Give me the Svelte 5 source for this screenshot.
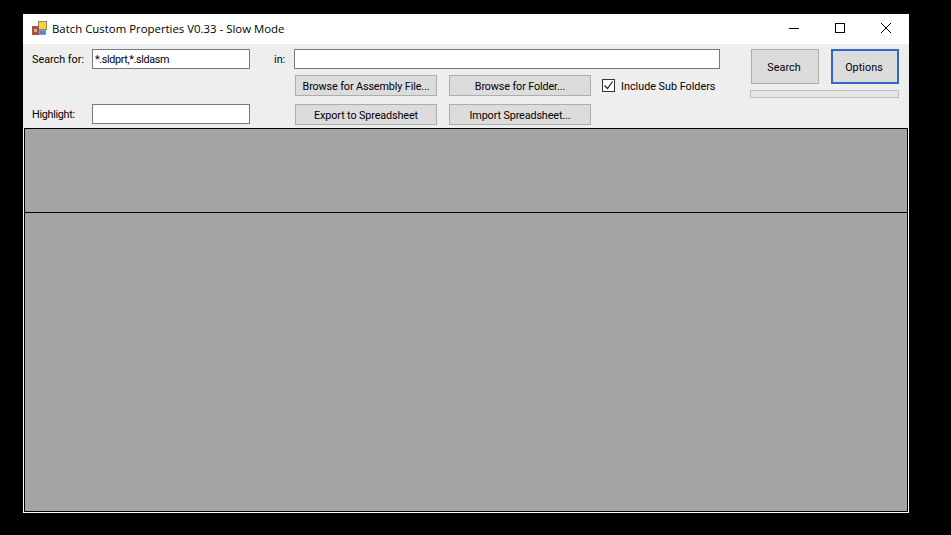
<script>
  let searchFor = '*.sldprt,*.sldasm';
</script>

<div class="window">
  <div class="titlebar">
    <svg class="app-icon" width="16" height="16" viewBox="0 0 16 16">
      <rect x="6.5" y="0.5" width="8" height="8" fill="#f7cf45" stroke="#9c8a4a" />
      <rect x="0.5" y="5.5" width="6" height="8" fill="#d93f2a" stroke="#8a5a50" />
      <rect x="2" y="8" width="3" height="3" fill="#f0a090" />
      <rect x="7.5" y="9.5" width="6" height="4" fill="#4f7fe0" stroke="#8898c0" />
    </svg>
    <span class="title">Batch Custom Properties V0.33 - Slow Mode</span>
    <div class="caption-buttons">
      <svg width="46" height="30" viewBox="0 0 46 30"><path d="M18 14.5h10" stroke="#000" fill="none" /></svg>
      <svg width="46" height="30" viewBox="0 0 46 30"><rect x="18.5" y="9.5" width="9" height="9" stroke="#000" fill="none" /></svg>
      <svg width="46" height="30" viewBox="0 0 46 30"><path d="M18 9l10 10M28 9L18 19" stroke="#000" fill="none" /></svg>
    </div>
  </div>

  <div class="toolbar">
    <div class="form">
      <label class="lbl-search" for="search">Search for:</label>
      <input id="search" class="txt" value={searchFor} />
      <label class="lbl-in" for="in">in:</label>
      <input id="in" class="txt" />

      <button class="btn col-a row-2">Browse for Assembly File...</button>
      <button class="btn col-b row-2">Browse for Folder...</button>
      <div class="check row-2">
        <span class="box">
          <svg width="11" height="11" viewBox="0 0 11 11"><path d="M1.5 5.5l3 3 5-7" stroke="#222" stroke-width="1.2" fill="none" /></svg>
        </span>
        <span class="check-text">Include Sub Folders</span>
      </div>

      <label class="lbl-hl" for="hl">Highlight:</label>
      <input id="hl" class="txt" />
      <button class="btn col-a row-3">Export to Spreadsheet</button>
      <button class="btn col-b row-3">Import Spreadsheet...</button>
    </div>

    <div class="actions">
      <div class="action-row">
        <button class="btn big">Search</button>
        <button class="btn big focused">Options</button>
      </div>
      <div class="progress"></div>
    </div>
  </div>

  <div class="panels">
    <div class="pane top"></div>
    <div class="pane bottom"></div>
  </div>
</div>

<style>
  :global(body) {
    margin: 0;
    background: #000;
  }

  .window {
    width: 886px;
    height: 499px;
    margin: 14px 0 0 23px;
    background: #fff;
    display: flex;
    flex-direction: column;
    font-family: Roboto, "Liberation Sans", sans-serif;
    font-size: 10.8px;
    color: #000;
  }

  .titlebar {
    height: 30px;
    flex: none;
    display: flex;
    align-items: center;
    padding-left: 9px;
  }

  .app-icon {
    margin-right: 4px;
  }

  .title {
    font-family: "Open Sans", "Noto Sans", sans-serif;
    font-size: 11.4px;
    margin-bottom: 2px;
  }

  .caption-buttons {
    display: flex;
    margin-left: auto;
  }

  .caption-buttons svg {
    display: block;
  }

  .toolbar {
    height: 84px;
    flex: none;
    box-sizing: border-box;
    background: #eee;
    padding: 5px 10px 0 9px;
    display: flex;
    justify-content: space-between;
  }

  .form {
    display: grid;
    grid-template-columns: 60px 158px 24px 20px 1px 142px 12px 142px 11px 118px;
    grid-template-rows: 26px 29px 21px;
    align-items: start;
  }

  label {
    line-height: 20px;
    white-space: nowrap;
    padding-top: 1px;
  }

  .lbl-search { grid-column: 1; grid-row: 1; }
  .lbl-in { grid-column: 4; grid-row: 1; }
  .lbl-hl { grid-column: 1; grid-row: 3; letter-spacing: -0.3px; }

  .txt {
    box-sizing: border-box;
    height: 20px;
    width: 100%;
    margin: 0;
    padding: 0 2px;
    border: 1px solid #7a7a7a;
    border-radius: 0;
    background: #fff;
    font: inherit;
    letter-spacing: -0.35px;
    color: #000;
    outline: none;
  }

  #search { grid-column: 2; grid-row: 1; }
  #in { grid-column: 5 / 11; grid-row: 1; width: 426px; }
  #hl { grid-column: 2; grid-row: 3; }

  .btn {
    box-sizing: border-box;
    margin: 0;
    padding: 2px 0 0;
    height: 21px;
    width: 100%;
    border: 1px solid #adadad;
    border-radius: 0;
    background: #dcdcdc;
    font: inherit;
    letter-spacing: -0.12px;
    color: #000;
    white-space: nowrap;
  }

  .col-a { grid-column: 6; }
  .col-b { grid-column: 8; }
  .row-2 { grid-row: 2; }
  .row-3 { grid-row: 3; }

  .check {
    grid-column: 10;
    display: flex;
    align-items: center;
    gap: 6px;
    height: 21px;
    white-space: nowrap;
  }

  .check-text {
    padding-top: 1px;
  }

  .box {
    box-sizing: border-box;
    width: 13px;
    height: 13px;
    border: 1px solid #333;
    background: #fff;
    display: flex;
    align-items: center;
    justify-content: center;
  }

  .box svg {
    display: block;
  }

  .actions {
    width: 149px;
    display: flex;
    flex-direction: column;
    align-items: flex-end;
    gap: 6px;
  }

  .action-row {
    display: flex;
    gap: 12px;
  }

  .big {
    width: 68px;
    height: 35px;
    padding-right: 2px;
    letter-spacing: 0.05px;
  }

  .focused {
    border: 2px solid #3168c8;
  }

  .progress {
    box-sizing: border-box;
    width: 149px;
    height: 8px;
    border: 1px solid #bcbcbc;
    background: #e6e6e6;
  }

  .panels {
    flex: none;
    box-sizing: border-box;
    width: 884px;
    height: 384px;
    margin-left: 1px;
    border: 1px solid #000;
    display: flex;
    flex-direction: column;
  }

  .pane {
    background: #a5a5a5;
  }

  .top {
    height: 83px;
    border-bottom: 1px solid #000;
  }

  .bottom {
    flex: 1;
  }
</style>
